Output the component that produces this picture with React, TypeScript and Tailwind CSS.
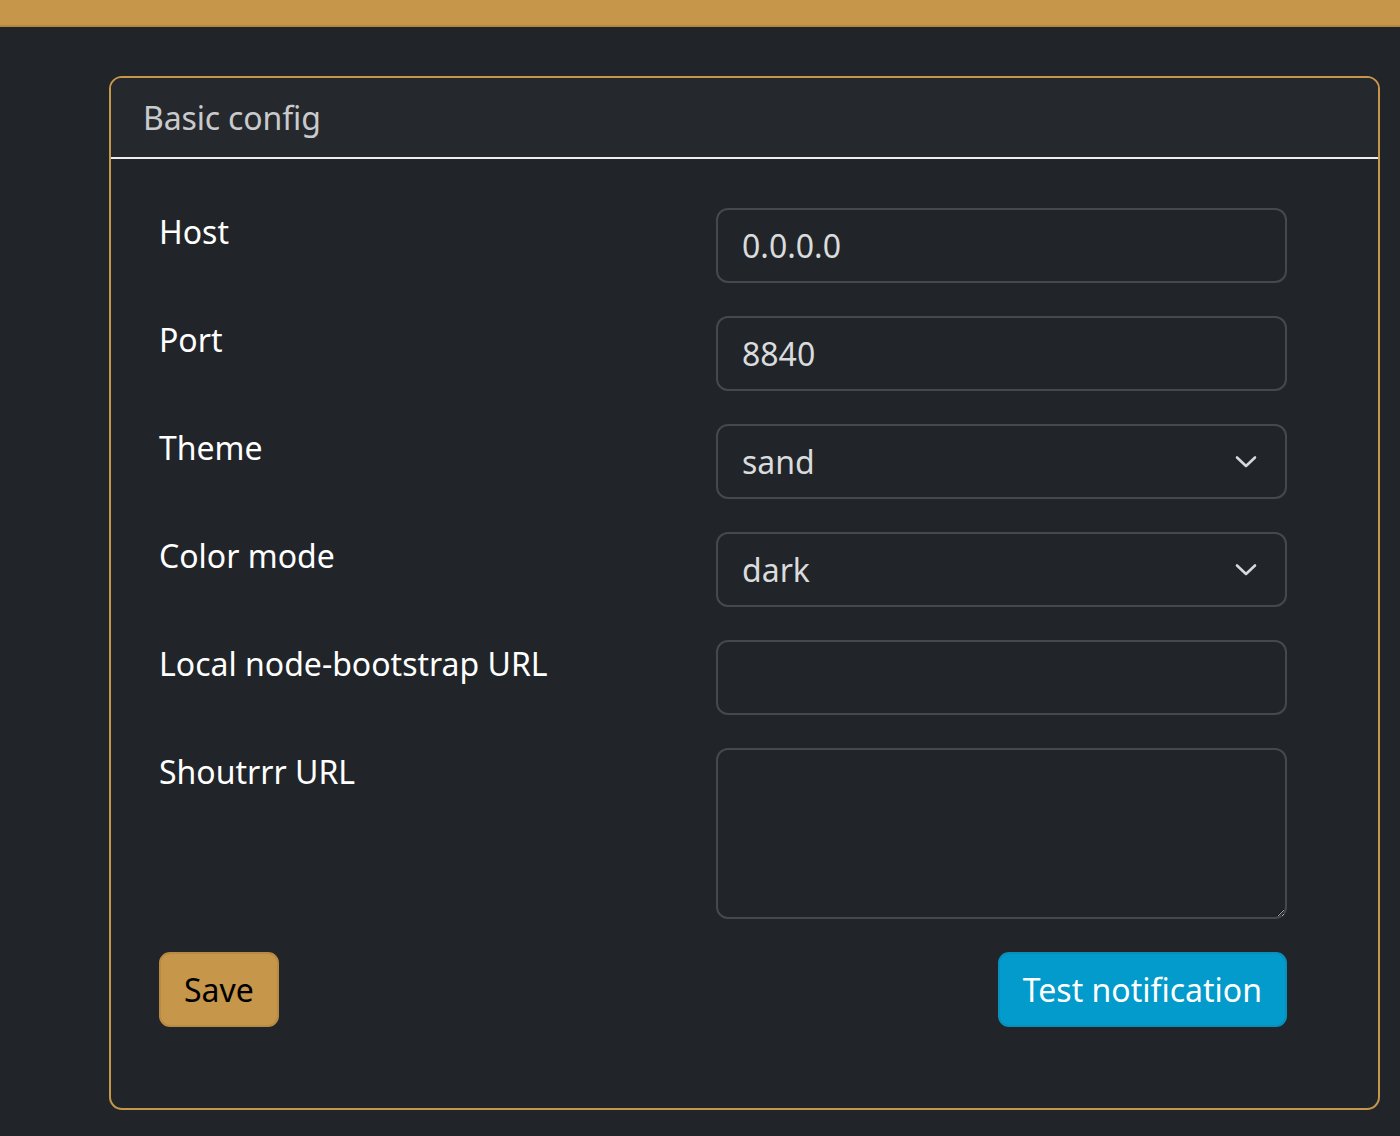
import React from "react";

function Chevron() {
  return (
    <svg
      width="22"
      height="13"
      viewBox="0 0 22 13"
      className="pointer-events-none absolute right-[30px] top-1/2 -translate-y-1/2"
    >
      <path d="M2 2 L11 10.5 L20 2" fill="none" stroke="#d6d8db" strokeWidth="2.6" strokeLinecap="round" strokeLinejoin="round" />
    </svg>
  );
}

const inputCls =
  "w-full h-[75px] rounded-[12px] border-2 border-[#45494e] bg-[#212529] px-[24px] text-[32px] leading-[48px] text-[#d9dbdd] outline-none";

function Row({ label, children }: { label: string; children: React.ReactNode }) {
  return (
    <>
      <div className="text-[32px] leading-[48px] text-white">{label}</div>
      <div>{children}</div>
    </>
  );
}

export default function App() {
  return (
    <div
      className="min-h-[1136px] bg-[#212529]"
      style={{ fontFamily: '"Noto Sans", "Open Sans", sans-serif' }}
    >
      <div className="h-[27px] bg-[#c6964a] border-b-2 border-[#b3873f]" />
      <div className="pl-[109px] pr-[20px] pt-[49px]">
        <div className="rounded-[13px] border-2 border-[#c6964a] overflow-hidden bg-[#212529]">
          <div className="bg-[#25282d] px-[32px] pt-[16px] pb-[15px] border-b-2 border-[#eeeeee] text-[32px] leading-[48px] tracking-[-0.15px] text-[#c9cacc]">
            Basic config
          </div>
          <div className="px-[48px] pt-[49px] pb-[81px]">
            <div className="grid grid-cols-[557px_571px] gap-y-[33px]">
              <Row label="Host">
                <input className={inputCls} defaultValue="0.0.0.0" />
              </Row>
              <Row label="Port">
                <input className={inputCls} defaultValue="8840" />
              </Row>
              <Row label="Theme">
                <div className="relative">
                  <select className={inputCls + " appearance-none"} defaultValue="sand">
                    <option value="sand">sand</option>
                  </select>
                  <Chevron />
                </div>
              </Row>
              <Row label="Color mode">
                <div className="relative">
                  <select className={inputCls + " appearance-none"} defaultValue="dark">
                    <option value="dark">dark</option>
                  </select>
                  <Chevron />
                </div>
              </Row>
              <Row label="Local node-bootstrap URL">
                <input className={inputCls} defaultValue="" />
              </Row>
              <Row label="Shoutrrr URL">
                <textarea
                  className="block w-full h-[171px] rounded-[12px] border-2 border-[#45494e] bg-[#212529] px-[24px] py-[12px] text-[32px] leading-[48px] text-[#d9dbdd] outline-none resize-y"
                />
              </Row>
            </div>
            <div className="mt-[33px] flex w-[1128px] items-center justify-between">
              <button className="h-[75px] rounded-[11px] border-2 border-[#b98a42] bg-[#c6964a] px-[23px] text-[32px] leading-[48px] text-black">
                Save
              </button>
              <button className="h-[75px] rounded-[11px] border-2 border-[#0890bd] bg-[#039acc] px-[23px] text-[32px] leading-[48px] text-white">
                Test notification
              </button>
            </div>
          </div>
        </div>
      </div>
    </div>
  );
}
